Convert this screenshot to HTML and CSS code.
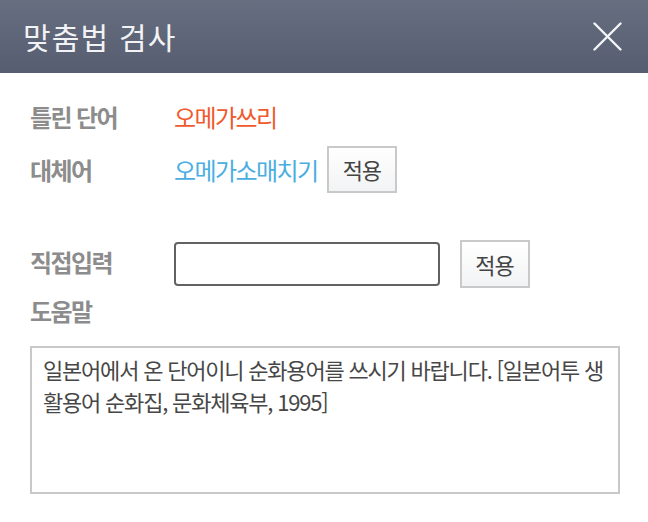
FILE: index.html
```html
<!DOCTYPE html>
<html lang="ko">
<head>
<meta charset="utf-8">
<title>맞춤법 검사</title>
<link rel="stylesheet" href="styles.css">
</head>
<body>
<div class="dialog">
  <header class="header">
    <h1 class="title">맞춤법 검사</h1>
    <button class="close" type="button" aria-label="닫기">
      <svg width="29" height="29" viewBox="0 0 29 29"><path d="M1.5 1.5 L27.5 27.5 M27.5 1.5 L1.5 27.5" stroke="#f4f5f7" stroke-width="2.4" stroke-linecap="round" fill="none"/></svg>
    </button>
  </header>
  <main class="content">
    <div class="row row-wrong">
      <span class="label">틀린 단어</span>
      <span class="value value-wrong">오메가쓰리</span>
    </div>
    <div class="row row-alt">
      <span class="label">대체어</span>
      <span class="value value-alt">오메가소매치기</span>
      <button class="apply apply-alt" type="button">적용</button>
    </div>
    <div class="row row-input">
      <span class="label label-input">직접입력</span>
      <input class="direct" type="text">
      <button class="apply apply-input" type="button">적용</button>
    </div>
    <div class="help-label">도움말</div>
    <div class="help-box">일본어에서 온 단어이니 순화용어를 쓰시기 바랍니다. [일본어투 생활용어 순화집, 문화체육부, 1995]</div>
  </main>
</div>
</body>
</html>
```
FILE: styles.css
```css
html, body {
  margin: 0;
  padding: 0;
  background: #ffffff;
}

body {
  font-family: "Noto Sans CJK KR", "Noto Sans", sans-serif;
  width: 648px;
  height: 522px;
  overflow: hidden;
}

.header {
  height: 73px;
  background: linear-gradient(#676e80, #575d70);
  display: flex;
  align-items: center;
  justify-content: space-between;
  padding: 0 26px 0 23px;
  box-sizing: border-box;
}

.title {
  margin: 0;
  font-size: 30px;
  font-weight: 400;
  color: #f2f3f5;
  letter-spacing: 1.2px;
  line-height: 1;
  padding-bottom: 1px;
}

.close {
  border: 0;
  background: none;
  padding: 0;
  width: 29px;
  height: 29px;
  display: flex;
  margin-top: -1px;
}

.content {
  padding: 20px 28px 0 30px;
}

.row {
  display: flex;
  align-items: center;
}

.label {
  width: 144px;
  flex: none;
  font-size: 24px;
  font-weight: 700;
  color: #8c8c8c;
  letter-spacing: -1.6px;
}

.label-input {
  padding-bottom: 5px;
}

.value {
  font-size: 24px;
  letter-spacing: -1.6px;
}

.value-wrong {
  color: #f05a2c;
}

.value-alt {
  color: #4aaee2;
}

.row-wrong {
  height: 46px;
}

.row-alt {
  height: 46px;
  margin-top: 7px;
}

.row-input {
  height: 48px;
  margin-top: 48px;
}

.apply {
  flex: none;
  width: 70px;
  border: 2px solid #c9c9c9;
  background: linear-gradient(#ffffff, #f2f3f4);
  font-family: "Noto Sans CJK KR", sans-serif;
  font-size: 22px;
  letter-spacing: -1px;
  color: #444;
  padding: 0 1px 0 0;
  box-sizing: border-box;
}

.apply-alt {
  height: 47px;
  margin-left: 10px;
}

.apply-input {
  height: 48px;
  margin-left: 20px;
}

.direct {
  width: 266px;
  height: 44px;
  box-sizing: border-box;
  border: 2px solid #626262;
  border-radius: 4px;
  background: #fff;
  margin: 0;
  padding: 0 8px;
  font-size: 20px;
}

.help-label {
  margin-top: 8px;
  height: 30px;
  line-height: 30px;
  font-size: 24px;
  font-weight: 700;
  color: #8c8c8c;
  letter-spacing: -1.6px;
}

.help-box {
  margin-top: 20px;
  width: 590px;
  height: 148px;
  box-sizing: border-box;
  border: 2px solid #c8c8c8;
  padding: 5px 10px 0 11px;
  font-size: 22px;
  line-height: 32px;
  letter-spacing: -1.2px;
  color: #474747;
}
```
